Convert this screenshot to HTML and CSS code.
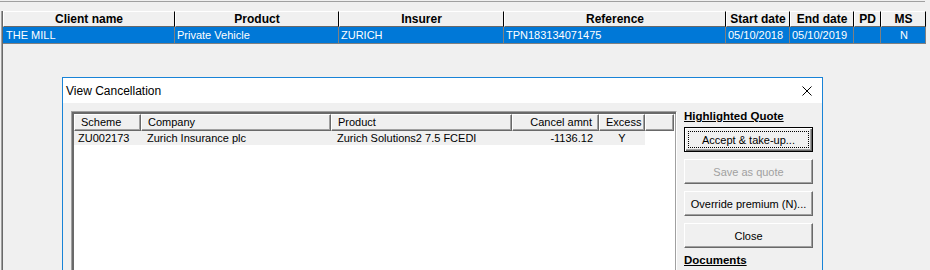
FILE: index.html
```
<!DOCTYPE html>
<html lang="en">
<head>
    <meta charset="UTF-8">
    <title>Policies - View Cancellation</title>
    <link rel="stylesheet" href="styles.css">
</head>
<body>
    <div class="toolbar-edge"></div>

    <div class="grid">
        <div class="grid-row grid-head">
            <div class="cell">Client name</div>
            <div class="cell">Product</div>
            <div class="cell">Insurer</div>
            <div class="cell">Reference</div>
            <div class="cell">Start date</div>
            <div class="cell">End date</div>
            <div class="cell">PD</div>
            <div class="cell">MS</div>
        </div>
        <div class="grid-row grid-sel">
            <div class="cell">THE MILL</div>
            <div class="cell">Private Vehicle</div>
            <div class="cell">ZURICH</div>
            <div class="cell">TPN183134071475</div>
            <div class="cell">05/10/2018</div>
            <div class="cell">05/10/2019</div>
            <div class="cell"></div>
            <div class="cell center">N</div>
        </div>
    </div>

    <div class="dialog">
        <div class="titlebar">
            <span class="title">View Cancellation</span>
            <span class="close-x">
                <svg width="10" height="10" viewBox="0 0 10 10">
                    <path d="M0.5 0.5 L9.5 9.5 M9.5 0.5 L0.5 9.5" stroke="#000" stroke-width="1" fill="none"/>
                </svg>
            </span>
        </div>

        <div class="dialog-body">
            <div class="listview">
                <div class="lv-row lv-head">
                    <div class="cell">Scheme</div>
                    <div class="cell">Company</div>
                    <div class="cell">Product</div>
                    <div class="cell right">Cancel amnt</div>
                    <div class="cell center">Excess</div>
                    <div class="cell"></div>
                </div>
                <div class="lv-row lv-item">
                    <div class="cell first">ZU002173</div>
                    <div class="cell">Zurich Insurance plc</div>
                    <div class="cell">Zurich Solutions2 7.5 FCEDI</div>
                    <div class="cell right">-1136.12</div>
                    <div class="cell center">Y</div>
                </div>
            </div>

            <div class="actions">
                <div class="group-label">Highlighted Quote</div>
                <button class="btn btn-default">Accept &amp; take-up...</button>
                <button class="btn" disabled>Save as quote</button>
                <button class="btn">Override premium (N)...</button>
                <button class="btn">Close</button>
                <div class="group-label">Documents</div>
            </div>
        </div>
    </div>
</body>
</html>
```

FILE: styles.css
```
body {
    margin: 0;
    height: 270px;
    overflow: hidden;
    background-color: #f0f0f0;
    font-family: 'Liberation Sans', Arial, sans-serif;
    font-size: 11px;
    color: #000;
}

.toolbar-edge {
    width: 925px;
    height: 1px;
    margin-top: 1px;
    background-color: #a0a0a0;
}

/* main policy grid */
.grid {
    width: 923px;
    height: 259px;
    margin: 9px 0 0 1px;
    border-left: 1px solid #a0a0a0;
    box-shadow: inset 1px 0 #696969;
    padding-left: 1px;
}

.grid-row {
    display: grid;
    grid-template-columns: 172px 164px 165px 222px 64px 64px 27px 45px;
}

.grid-row .cell {
    box-sizing: border-box;
    white-space: nowrap;
    overflow: hidden;
}

.grid-head .cell {
    height: 16px;
    line-height: 14px;
    border-top: 1px solid #fff;
    border-left: 1px solid #fff;
    border-right: 1px solid #000;
    border-bottom: 1px solid #696969;
    font-size: 12px;
    font-weight: bold;
    text-align: center;
}

.grid-sel .cell {
    height: 17px;
    line-height: 16px;
    padding-left: 2px;
    background-color: #0078d7;
    color: #fff;
    border-right: 1px solid #808080;
    border-bottom: 1px solid #808080;
}

.grid-sel .cell:first-child {
    padding-left: 3px;
}

.center {
    text-align: center;
}

.right {
    text-align: right;
}

/* dialog window */
.dialog {
    position: absolute;
    left: 62px;
    top: 77px;
    width: 761px;
    height: 193px;
    box-sizing: border-box;
    border: 1px solid #1883d7;
    border-bottom: none;
    background-color: #f0f0f0;
    overflow: hidden;
}

.titlebar {
    height: 25px;
    display: flex;
    align-items: center;
    justify-content: space-between;
    padding-left: 3px;
    background-color: #fff;
}

.title {
    font-family: 'Liberation Sans', Arial, sans-serif;
    font-size: 12px;
}

.close-x {
    display: flex;
    margin-right: 10px;
}

.dialog-body {
    display: flex;
    gap: 7px;
    padding: 8px 9px 0 8px;
}

.listview {
    width: 606px;
    height: 159px;
    box-sizing: border-box;
    border-top: 1px solid #a0a0a0;
    border-left: 1px solid #a0a0a0;
    border-right: 1px solid #fff;
    box-shadow: inset 2px 2px #696969, inset -1px 0 #a0a0a0;
    padding: 2px 2px 0 2px;
    background-color: #fff;
}

.lv-row {
    display: grid;
    grid-template-columns: 67px 190px 181px 87px 46px 29px;
}

.lv-row .cell {
    box-sizing: border-box;
    white-space: nowrap;
    overflow: hidden;
}

.lv-head .cell {
    height: 17px;
    line-height: 15px;
    padding: 0 6px;
    border-top: 1px solid #fff;
    border-left: 1px solid #fff;
    border-right: 1px solid #696969;
    border-bottom: 1px solid #696969;
    box-shadow: inset -1px -1px #a0a0a0;
    background-color: #f0f0f0;
}

.lv-item {
    grid-template-columns: 67px 190px 181px 87px 46px;
}

.lv-item .cell {
    height: 14px;
    line-height: 14px;
    padding: 0 6px;
    background-color: #f0f0f0;
}

.lv-item .cell.first {
    padding-left: 4px;
}

/* buttons column */
.actions {
    width: 129px;
    display: flex;
    flex-direction: column;
}

.group-label {
    height: 14px;
    line-height: 14px;
    margin-top: -2px;
    margin-bottom: 4px;
    font-size: 11.5px;
    font-weight: bold;
    text-decoration: underline;
}

.btn {
    width: 129px;
    height: 25px;
    margin-bottom: 7px;
    padding: 0;
    box-sizing: border-box;
    background-color: #f0f0f0;
    border: 1px solid;
    border-color: #fff #696969 #696969 #fff;
    box-shadow: inset -1px -1px #a0a0a0;
    font-family: 'Liberation Sans', Arial, sans-serif;
    font-size: 11px;
    color: #000;
}

.btn:disabled {
    color: #a0a0a0;
}

.btn-default {
    border: 1px solid #000;
    box-shadow: inset 1px 1px #fff, inset -1px -1px #696969, inset -2px -2px #a0a0a0;
    outline: 1px dotted #000;
    outline-offset: -5px;
}

.actions .btn + .group-label {
    margin-top: -2px;
}
```
